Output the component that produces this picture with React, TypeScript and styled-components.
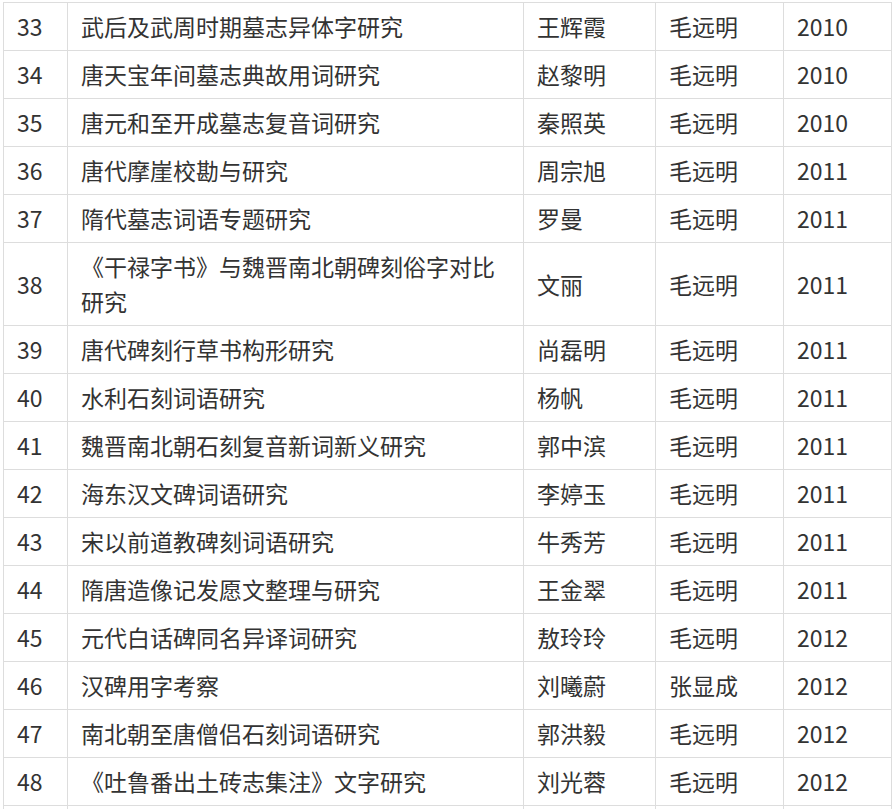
import React from "react";
import styled, { createGlobalStyle } from "styled-components";

const GlobalStyle = createGlobalStyle`
  html, body {
    margin: 0;
    padding: 0;
    background: #ffffff;
  }
  body {
    font-family: "Noto Sans CJK SC", "Noto Sans", sans-serif;
    color: #333333;
  }
`;

const Page = styled.div`
  padding: 2px 5px 0 3px;
  overflow: hidden;
`;

const Table = styled.table`
  border-collapse: collapse;
  table-layout: fixed;
  width: 888px;
  font-size: 23px;
  color: #333333;
`;

const Col = styled.col<{ $w: number }>`
  width: ${(p) => p.$w}px;
`;

const Row = styled.tr``;

const Cell = styled.td`
  box-sizing: border-box;
  border: 1px solid #dddddd;
  padding: 6px 14px 6px 13px;
  line-height: 35px;
  vertical-align: middle;
  text-align: left;
  word-break: break-all;
  text-spacing-trim: space-all;
`;

type Item = [string, string, string, string, string];

const rows: Item[] = [
  ["33", "武后及武周时期墓志异体字研究", "王辉霞", "毛远明", "2010"],
  ["34", "唐天宝年间墓志典故用词研究", "赵黎明", "毛远明", "2010"],
  ["35", "唐元和至开成墓志复音词研究", "秦照英", "毛远明", "2010"],
  ["36", "唐代摩崖校勘与研究", "周宗旭", "毛远明", "2011"],
  ["37", "隋代墓志词语专题研究", "罗曼", "毛远明", "2011"],
  ["38", "《干禄字书》与魏晋南北朝碑刻俗字对比研究", "文丽", "毛远明", "2011"],
  ["39", "唐代碑刻行草书构形研究", "尚磊明", "毛远明", "2011"],
  ["40", "水利石刻词语研究", "杨帆", "毛远明", "2011"],
  ["41", "魏晋南北朝石刻复音新词新义研究", "郭中滨", "毛远明", "2011"],
  ["42", "海东汉文碑词语研究", "李婷玉", "毛远明", "2011"],
  ["43", "宋以前道教碑刻词语研究", "牛秀芳", "毛远明", "2011"],
  ["44", "隋唐造像记发愿文整理与研究", "王金翠", "毛远明", "2011"],
  ["45", "元代白话碑同名异译词研究", "敖玲玲", "毛远明", "2012"],
  ["46", "汉碑用字考察", "刘曦蔚", "张显成", "2012"],
  ["47", "南北朝至唐僧侣石刻词语研究", "郭洪毅", "毛远明", "2012"],
  ["48", "《吐鲁番出土砖志集注》文字研究", "刘光蓉", "毛远明", "2012"],
  ["49", "北朝碑刻文字研究", "王永", "毛远明", "2012"],
];

const widths = [64, 456, 132, 128, 108];

export default function App() {
  return (
    <>
      <GlobalStyle />
      <Page>
        <Table>
          <colgroup>
            {widths.map((w, i) => (
              <Col key={i} $w={w} />
            ))}
          </colgroup>
          <tbody>
            {rows.map((r) => (
              <Row key={r[0]}>
                {r.map((c, i) => (
                  <Cell key={i}>{c}</Cell>
                ))}
              </Row>
            ))}
          </tbody>
        </Table>
      </Page>
    </>
  );
}
